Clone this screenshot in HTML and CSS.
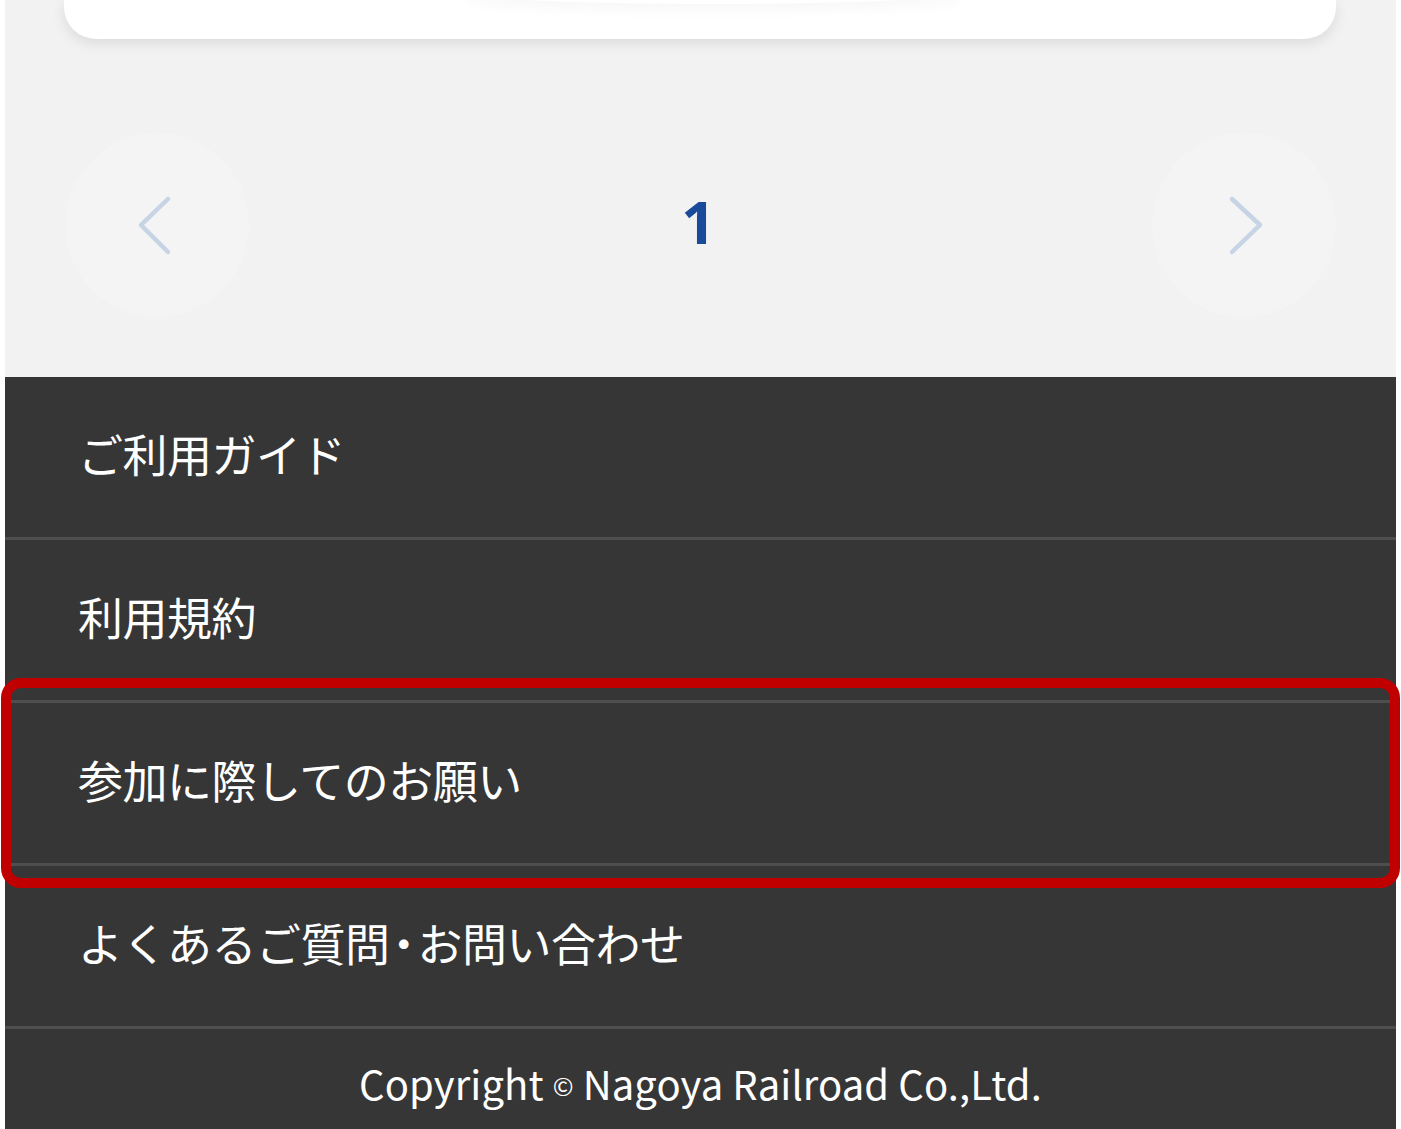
FILE: index.html
```html
<!DOCTYPE html>
<html lang="ja">
<head>
<meta charset="utf-8">
<title>Footer</title>
<link rel="stylesheet" href="styles.css">
</head>
<body>
<div class="page">
  <section class="upper">
    <div class="card-wrap">
      <div class="card"><div class="card-glow"></div></div>
    </div>
    <nav class="pager">
      <a class="pager-btn" href="#" aria-label="前へ">
        <svg width="184" height="184" viewBox="0 0 184 184"><polyline points="103,66 76,92 103,119" fill="none" stroke="#c6d4e6" stroke-width="4.5" stroke-linecap="round" stroke-linejoin="round"/></svg>
      </a>
      <span class="pager-num">1</span>
      <a class="pager-btn" href="#" aria-label="次へ">
        <svg width="184" height="184" viewBox="0 0 184 184"><polyline points="80,66 108,92 80,119" fill="none" stroke="#c6d4e6" stroke-width="4.5" stroke-linecap="round" stroke-linejoin="round"/></svg>
      </a>
    </nav>
  </section>
  <footer class="footer">
    <ul class="menu">
      <li class="menu-item"><a href="#">ご利用ガイド</a></li>
      <li class="menu-item"><a href="#">利用規約</a></li>
      <li class="menu-item highlighted"><a href="#">参加に際してのお願い</a><span class="highlight-box"></span></li>
      <li class="menu-item"><a href="#">よくあるご質問<span class="dot">・</span>お問い合わせ</a></li>
    </ul>
    <p class="copyright">Copyright <span class="copy-mark">©</span> Nagoya Railroad Co.,Ltd.</p>
  </footer>
</div>
</body>
</html>
```

FILE: styles.css
```css
* { box-sizing: border-box; }
html, body { margin: 0; padding: 0; background: #ffffff; }
body {
  font-family: "Noto Sans CJK JP", "Noto Sans", sans-serif;
  overflow: hidden;
}
.page {
  margin: 0 5px;
  width: 1391px;
}
.upper {
  background: #f2f2f2;
  height: 377px;
  display: flex;
  flex-direction: column;
}
.card-wrap {
  padding: 0 60px 0 59px;
}
.card {
  position: relative;
  height: 39px;
  background: #fff;
  border-radius: 0 0 32px 32px;
  box-shadow: 0 4px 14px rgba(0, 0, 0, 0.10);
  overflow: hidden;
}
.card-glow {
  position: absolute;
  left: 400px;
  width: 500px;
  top: -20px;
  height: 24px;
  border-radius: 50%;
  box-shadow: 0 6px 14px rgba(0, 0, 0, 0.035);
}
.pager {
  display: flex;
  align-items: center;
  justify-content: space-between;
  padding: 94px 60px 0 60px;
}
.pager-btn {
  width: 184px;
  height: 184px;
  border-radius: 50%;
  background: #f4f4f4;
  display: block;
}
.pager-btn svg { display: block; }
.pager-num {
  font-family: "Noto Sans", "Open Sans", sans-serif;
  font-weight: 700;
  font-size: 60px;
  line-height: 1;
  color: #1a4b9b;
  margin-left: -4px;
  margin-top: -8px;
}
.footer {
  background: #363636;
  color: #ffffff;
}
.menu {
  list-style: none;
  margin: 0;
  padding: 0;
}
.menu-item {
  position: relative;
  height: 163px;
  border-bottom: 3px solid #4e4e4e;
  display: flex;
  align-items: center;
  padding-left: 73px;
  padding-bottom: 8px;
}
.menu-item a {
  color: #ffffff;
  text-decoration: none;
  font-size: 45px;
  font-weight: 400;
  letter-spacing: -0.5px;
}
.dot {
  font-feature-settings: "palt";
  padding: 0 3px;
}
.highlight-box {
  position: absolute;
  left: -4px;
  right: -4px;
  top: -25px;
  bottom: -25px;
  border: 10px solid #c00000;
  border-radius: 20px;
  pointer-events: none;
}
.copyright {
  margin: 0;
  padding: 30px 0 40px;
  text-align: center;
  font-family: "Noto Sans CJK JP", sans-serif;
  font-size: 40px;
  line-height: 48px;
  letter-spacing: 0.1px;
  color: #ffffff;
}
.copy-mark {
  font-size: 25px;
  vertical-align: 4px;
}
```
